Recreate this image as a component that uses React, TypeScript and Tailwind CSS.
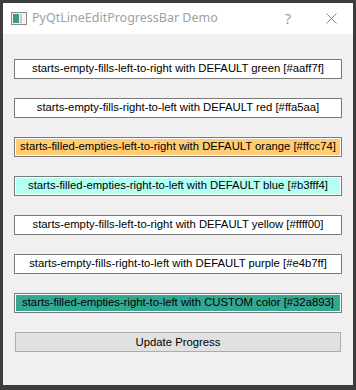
const bars = [
  { label: "starts-empty-fills-left-to-right with DEFAULT green [#aaff7f]", fill: "bg-white" },
  { label: "starts-empty-fills-right-to-left with DEFAULT red [#ffa5aa]", fill: "bg-white" },
  { label: "starts-filled-empties-left-to-right with DEFAULT orange [#ffcc74]", fill: "bg-[#ffcc74]" },
  { label: "starts-filled-empties-right-to-left with DEFAULT blue [#b3fff4]", fill: "bg-[#b3fff4]" },
  { label: "starts-empty-fills-left-to-right with DEFAULT yellow [#ffff00]", fill: "bg-white" },
  { label: "starts-empty-fills-right-to-left with DEFAULT purple [#e4b7ff]", fill: "bg-white" },
  { label: "starts-filled-empties-right-to-left with CUSTOM color [#32a893]", fill: "bg-[#32a893]" },
]

const WindowIcon = () => (
  <svg width="16" height="13" viewBox="0 0 16 13">
    <rect x="0.5" y="0.5" width="15" height="12" fill="#f4f4f4" stroke="#8a8a8a" />
    <rect x="2" y="2" width="6" height="9" fill="#3a9a8a" />
    <rect x="9" y="2" width="2" height="9" fill="#c9c9c9" />
  </svg>
)

export default function App() {
  return (
    <div className="w-[356px] h-[390px] bg-[#3d3d3d] pt-[3px] pl-[3px]">
      <div className="w-[350px] h-[382px] bg-[#f0f0f0] flex flex-col font-['Liberation_Sans',sans-serif]">
        <div className="h-[31px] bg-white flex items-center pl-[8px] pr-[16px]">
          <WindowIcon />
          <span className="ml-[5px] text-[12.5px] text-[#a0a0a0] font-['Noto_Sans',sans-serif]">
            PyQtLineEditProgressBar Demo
          </span>
          <span className="ml-auto text-[14px] text-[#9a9a9a] font-['Noto_Sans',sans-serif]">?</span>
          <svg className="ml-[35px]" width="11" height="11" viewBox="0 0 11 11">
            <path d="M0.5 0.5 L10.5 10.5 M10.5 0.5 L0.5 10.5" stroke="#8a8a8a" strokeWidth="1" />
          </svg>
        </div>
        <div className="flex flex-col gap-[19px] pt-[25px] px-[11px]">
          {bars.map((b) => (
            <div key={b.label} className="h-[20px] border border-[#7a7a7a] bg-white p-px">
              <div className={`h-full ${b.fill} flex items-center justify-center text-[11.3px] text-black leading-none whitespace-nowrap`}>
                {b.label}
              </div>
            </div>
          ))}
          <button className="mx-px h-[20px] border border-[#adadad] bg-[#e1e1e1] text-[11.3px] text-black flex items-center justify-center">
            Update Progress
          </button>
        </div>
      </div>
    </div>
  )
}
